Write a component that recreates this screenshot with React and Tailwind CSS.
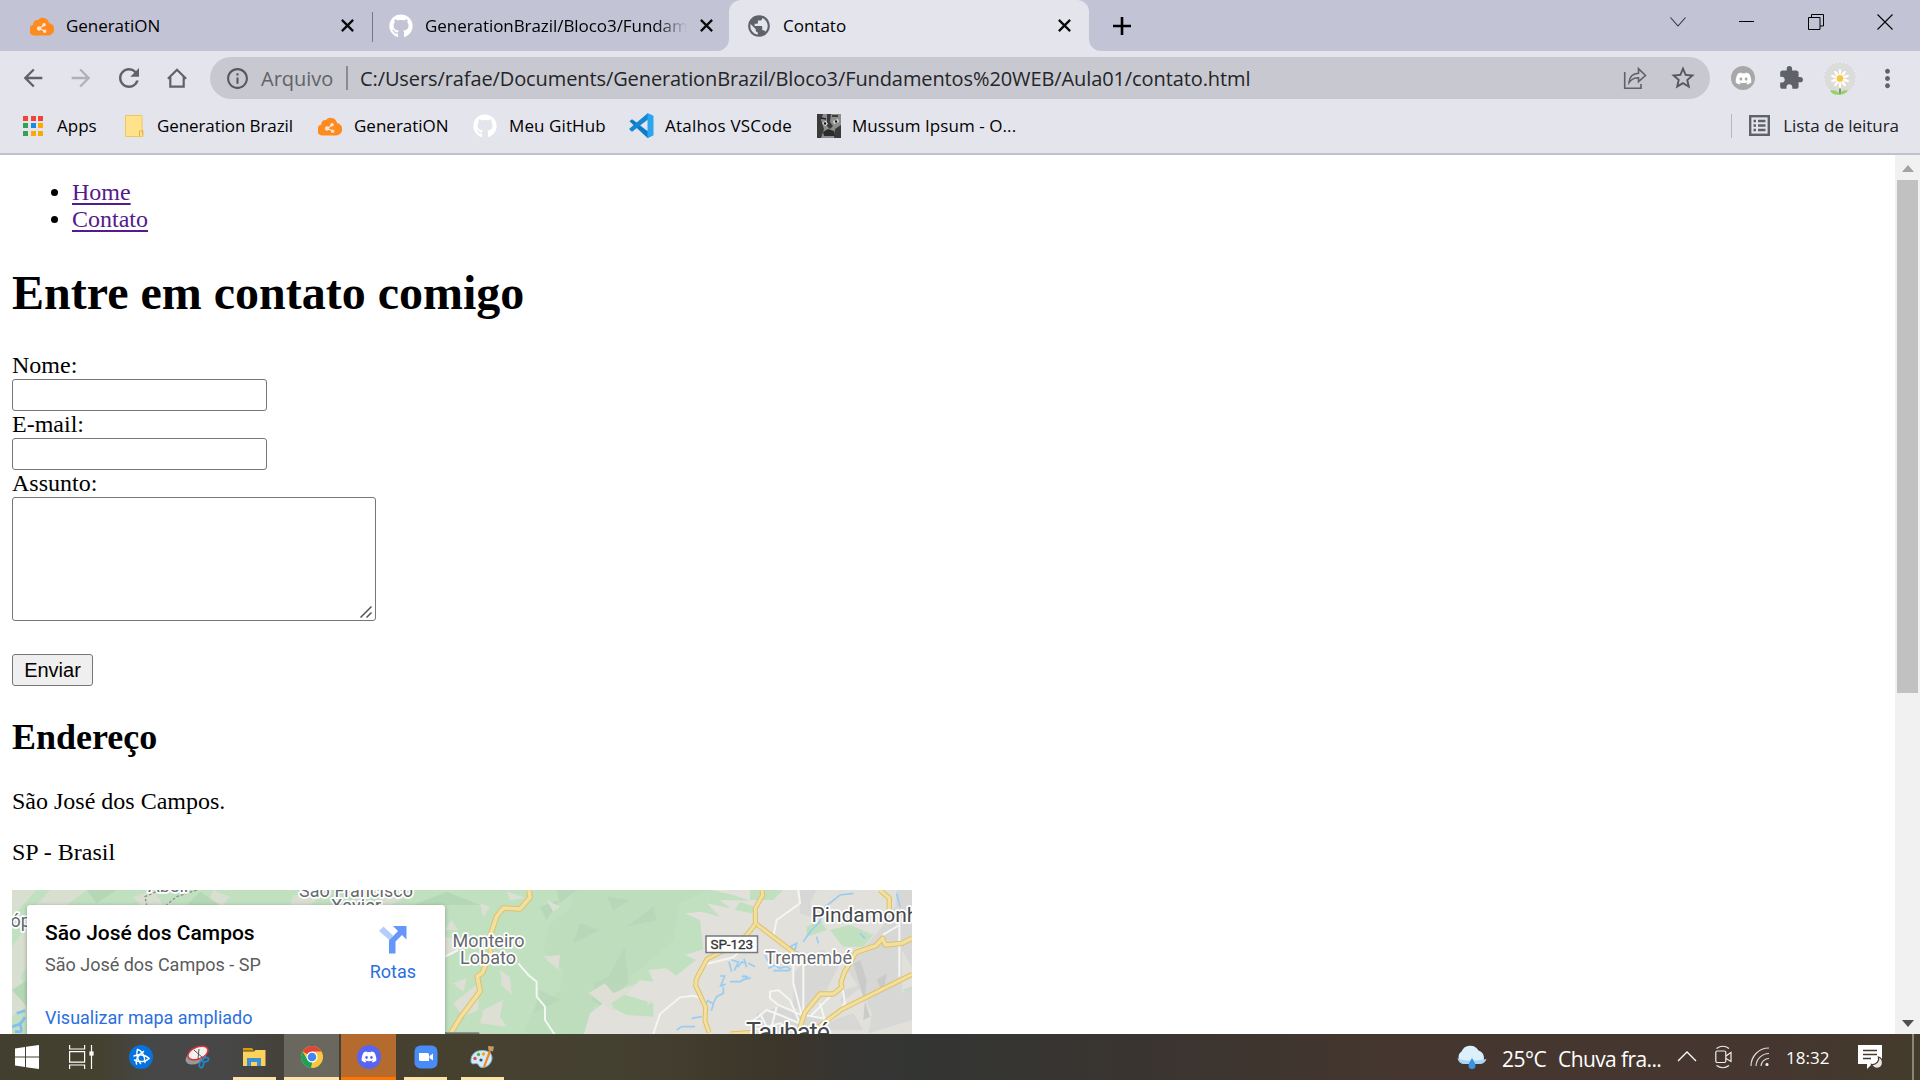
import React from "react";
import {
  MdArrowBack,
  MdArrowForward,
  MdRefresh,
  MdOutlineInfo,
  MdStarBorder,
  MdExtension,
  MdMoreVert,
  MdPublic,
} from "react-icons/md";
import { FaGithub, FaDiscord } from "react-icons/fa";

const UI = "font-['Open_Sans','Noto_Sans',sans-serif]";

function CloudIcon() {
  return (
    <svg width="24" height="20" viewBox="0 0 24 20" className="shrink-0">
      <path d="M5.500 19.500A5.500 5.500 0 0 1 3.500 8.500C2.800 5.500 5.500 3.500 7.800 4A6.500 6.500 0 0 1 19 7 6.300 6.300 0 0 1 18 19.500z" fill="#ff8b1f" />
      <g stroke="#f6e6dd" strokeWidth="1.300" fill="#f6e6dd">
        <path d="M9.500 12.500 14 9M9.500 12.500l5 2.500" fill="none" />
        <circle cx="9" cy="12.500" r="1.500" />
        <circle cx="14" cy="8.800" r="1.100" />
        <circle cx="14.700" cy="15.300" r="1.100" />
      </g>
    </svg>
  );
}

function CloseX() {
  return (
    <svg width="13" height="13" viewBox="0 0 12 12" className="shrink-0">
      <path d="M.8.8l10.400 10.400M11.200.8.8 11.200" stroke="#0a0a0a" strokeWidth="2.100" />
    </svg>
  );
}

function TabStrip() {
  return (
    <div className="flex h-[51px] bg-[#c3c3d6] text-[17px] text-black">
      <div className="flex w-[372px] items-center pl-[30px]">
        <CloudIcon />
        <span className="ml-3 w-[275px] tracking-[-0.05px]">GeneratiON</span>
        <CloseX />
      </div>
      <div className="mt-3 h-[30px] w-px bg-[#77778a]" />
      <div className="flex w-[344px] items-center pl-4">
        <FaGithub size={24} color="#fff" className="shrink-0" />
        <span className="ml-3 w-[262px] overflow-hidden whitespace-nowrap tracking-[-0.06px] [mask-image:linear-gradient(to_right,#000_88%,transparent)]">
          GenerationBrazil/Bloco3/Fundamentos
        </span>
        <span className="ml-[13px] flex">
          <CloseX />
        </span>
      </div>
      <div className="flex">
        <div className="w-3 self-end">
          <svg width="12" height="12" viewBox="0 0 12 12" className="block">
            <path d="M12 0v12H0A12 12 0 0 0 12 0z" fill="#e4e4ed" />
          </svg>
        </div>
        <div className="flex w-[360px] items-center rounded-t-xl bg-[#e4e4ed] pl-[17px]">
          <MdPublic size={26} color="#5f6368" className="shrink-0" />
          <span className="ml-[11px] w-[275px]">Contato</span>
          <CloseX />
        </div>
        <div className="w-3 self-end">
          <svg width="12" height="12" viewBox="0 0 12 12" className="block">
            <path d="M0 0v12h12A12 12 0 0 1 0 0z" fill="#e4e4ed" />
          </svg>
        </div>
      </div>
      <svg width="18" height="18" viewBox="0 0 18 18" className="ml-3 mt-[17px]">
        <path d="M9 0v18M0 9h18" stroke="#000" strokeWidth="2.600" />
      </svg>
      <div className="ml-auto mr-[35px] flex h-[43px] items-center">
        <svg width="16" height="10" viewBox="0 0 16 10">
          <path d="M.5.5 8 9 15.500.5" fill="none" stroke="#333" strokeWidth="1.100" />
        </svg>
        <div className="ml-[53px] h-px w-[15px] bg-black" />
        <svg width="16" height="16" viewBox="0 0 16 16" className="ml-[54px]">
          <path d="M.5 3.500h11.500v12H.5zM3.500 3.500v-3h12v11.500H12" fill="none" stroke="#000" />
        </svg>
        <svg width="16" height="16" viewBox="0 0 16 16" className="ml-[53px] mr-[-8px]">
          <path d="M.5.5l15 15M15.500.5l-15 15" stroke="#000" strokeWidth="1.100" />
        </svg>
      </div>
    </div>
  );
}

function Daisy() {
  const petals = [0, 36, 72, 108, 144, 180, 216, 252, 288, 324];
  return (
    <svg width="34" height="34" viewBox="0 0 34 34">
      <circle cx="17" cy="17" r="16" fill="#dcdcdc" stroke="#efefef" strokeDasharray="2 2" />
      <path d="M17 26v7.500" stroke="#5f8f3c" strokeWidth="1.600" />
      <path d="M17 33.500c-2-4-6-5-10-4 2 4 6 5 10 4zM17 33.500c1-4 4-5 8-4-2 3-5 4.500-8 4z" fill="#9ad06b" />
      {petals.map((a) => (
        <ellipse key={a} cx="17" cy="12" rx="1.700" ry="4.500" fill="#fff" stroke="#d8cfae" strokeWidth=".5" transform={`rotate(${a} 17 17.500)`} />
      ))}
      <circle cx="17" cy="17.500" r="3.200" fill="#f5c63f" />
    </svg>
  );
}

function Toolbar() {
  return (
    <div className="flex h-[54px] items-center bg-[#e4e4ed] text-[#5f6368]">
      <div className="ml-[19px] flex items-center gap-5">
        <MdArrowBack size={28} />
        <MdArrowForward size={28} color="#b0b0b7" />
        <MdRefresh size={30} className="-ml-px" />
        <svg width="20" height="20" viewBox="0 0 20 20" className="ml-[3px]">
          <path d="M3.300 8.800V18.700H16.700V8.800M.9 10.700 10 1.700l9.100 9" fill="none" stroke="#5f6368" strokeWidth="2.200" />
        </svg>
      </div>
      <div className="ml-[23px] flex h-[42px] w-[1500px] shrink-0 items-center rounded-full bg-[#c8c8d0] text-[20px]">
        <MdOutlineInfo size={25} className="ml-[15px] text-[#55585d]" />
        <span className="ml-[11px] w-[85px] pt-px tracking-[0px]">Arquivo</span>
        <div className="h-6 w-[2px] bg-[#8a8a92]" />
        <span className="ml-3 whitespace-nowrap pt-px tracking-[-0.1px] text-[#242528]">
          C:/Users/rafae/Documents/GenerationBrazil/Bloco3/Fundamentos%20WEB/Aula01/contato.html
        </span>
        <svg width="24" height="24" viewBox="0 0 24 24" className="ml-auto mr-[22px]">
          <path d="M1.700 6v16.200H18V18M6 16.500C6.500 10.500 10 7.500 15.500 7.200V2.700L22.500 9.500 15.500 15.700V11.700C11 11.700 8.500 13 6 16.500z" fill="none" stroke="#5f6368" strokeWidth="1.600" />
        </svg>
        <MdStarBorder size={28} className="mr-[13px] text-[#55585d]" />
      </div>
      <div className="ml-[21px] flex h-6 w-6 items-center justify-center rounded-full bg-[#a8a8a8]">
        <FaDiscord size={17} color="#fff" />
      </div>
      <MdExtension size={26} className="ml-[23px]" />
      <div className="ml-[19px]">
        <Daisy />
      </div>
      <MdMoreVert size={29} className="ml-[16px]" />
    </div>
  );
}

function Bookmarks() {
  const cells = ["#f44336", "#f44336", "#f44336", "#34a15a", "#1e88e5", "#f9ab00", "#34a15a", "#f9ab00", "#f9ab00"];
  return (
    <div className="flex h-[50px] items-center border-b-2 border-[#c1c1cc] bg-[#e4e4ed] pb-[7px] text-[17px] whitespace-nowrap text-black">
      <div className="ml-[23px] grid grid-cols-3 gap-x-[2.500px] gap-y-[2.500px]">
        {cells.map((c, i) => (
          <svg key={i} width="5" height="5"><rect width="5" height="5" fill={c} /></svg>
        ))}
      </div>
      <span className="ml-[14px] w-[68px]">Apps</span>
      <svg width="19" height="22" viewBox="0 0 19 22">
        <path d="M.5.5h16.500V15h1v6.500H.5z" fill="#ffe28a" stroke="#ecc85d" />
        <path d="M14.500 21v-5h3v4.500" fill="none" stroke="#ddb443" />
      </svg>
      <span className="ml-[13px] w-[161px] tracking-[-0.1px]">Generation Brazil</span>
      <CloudIcon />
      <span className="ml-3 w-[119px]">GeneratiON</span>
      <FaGithub size={24} color="#fff" />
      <span className="ml-3 w-[120px] tracking-[0.1px]">Meu GitHub</span>
      <svg width="25" height="25" viewBox="0 0 25 25">
        <path d="M.5 8.300 3 6.300 24 21v1.200L18.500 25z" fill="#0f7ac4" />
        <path d="M.5 16.700 3 18.700 19 6.500V0L.5 15.500z" fill="#1487d0" />
        <path d="M18.500 0 24.500 2.700V22.200L18.500 25V18.200L11 12.500 18.500 6.800z" fill="#2aa5ee" />
        <path d="M18.500 7v11L11.300 12.500z" fill="#e4e4ed" />
      </svg>
      <span className="ml-[11px] w-[152px] tracking-[0.22px]">Atalhos VSCode</span>
      <svg width="24" height="24" viewBox="0 0 24 24">
        <rect width="24" height="24" fill="#8d8d8d" />
        <path d="M0 0h6L4 6l3 9-3 9H0zM10 0h4l-1 8 3 4-3 3-3-3zM18 15l6-4v13h-7z" fill="#3a3a3a" />
        <path d="M6 18l5-3 6 2 1 5H7z" fill="#2c2c2c" />
        <path d="M5 9l4-2 2 3-3 2zM16 7l5-2 1 3-5 2z" fill="#e0e0e0" />
        <circle cx="8" cy="9.500" r="1.200" fill="#111" />
        <circle cx="19" cy="7.500" r="1.200" fill="#111" />
        <path d="M15 2l6 0M4 4l5 1" stroke="#222" strokeWidth="1.500" />
      </svg>
      <span className="ml-[11px] tracking-[0.07px]">Mussum Ipsum - O...</span>
      <div className="ml-auto mr-[21px] flex items-center text-[#202124]">
        <div className="mr-[17px] h-6 w-px bg-[#b7b7c2]" />
        <svg width="21" height="21" viewBox="0 0 21 21">
          <rect x="1.200" y="1.200" width="18.600" height="18.600" fill="none" stroke="#5f6368" strokeWidth="2.400" />
          <path d="M4.500 6h2.500M4.500 10.500h2.500M4.500 15h2.500M9 6h7.500M9 10.500h7.500M9 15h7.500" stroke="#5f6368" strokeWidth="2.300" />
        </svg>
        <span className="ml-[13px] tracking-[-0.05px]">Lista de leitura</span>
      </div>
    </div>
  );
}

function Road({ d, w = 16 }) {
  return (
    <g fill="none" strokeLinejoin="round">
      <path d={d} stroke="#dfc169" strokeWidth={w} />
      <path d={d} stroke="#f2e0a0" strokeWidth={w - 6} />
    </g>
  );
}

function MapDrawing() {
  const halo = { stroke: "#fff", strokeWidth: 3.5, strokeLinejoin: "round", paintOrder: "stroke" };
  return (
    <svg width="900" height="144" viewBox="0 0 900 144" className="block" fontFamily="Roboto, sans-serif">
      <rect width="900" height="144" fill="#c1e0c0" />
      <g transform="translate(-12 -10) scale(.33333)">
        <path d="M36 30H110L36 110zM36 200l45-60v120l-20 30 20 30v60l-45 30zM150 30l110 0-60 45h-90zM400 50l60-20 30 45h-70zM640 30l50 20-20 25h-50zM880 45l80 5-30 25h-60zM1180 30l60 10-70 35h-60z" fill="#dddfd5" opacity=".8" />
        <path d="M260 30h90l-60 40zM560 75l40-40 60 40zM1240 75l100-40 100 40zM36 330l45-30v80z" fill="#b4d8b6" />
        <path d="M480 30l-45 20 5 25M590 30l-60 20-30 25" stroke="#8b918d" strokeWidth="4" strokeDasharray="8 6" fill="none" />
        <path d="M50 400l25-8M36 440l25-8 14-20M60 425l5 30M45 455h20" stroke="#85bdf0" strokeWidth="8" fill="none" />
        <path d="M1360 370l75-60v80l-45 20zM1335 150l20-30 20 30z" fill="#dddfd5" />
      </g>
      <g transform="translate(428 -10) scale(.33333)">
        <path d="M400 30l-10 60-60 40-20 80 60 60-10 60-80 60-30 70h180l40-100 140-100 90-80 20-110 80-40z" fill="#bdddbd" />
        <path d="M350 30l60 0-50 40zM300 80l60-20-40 60zM500 50l70 10-50 30zM420 130l60 20-80 40zM640 80l-80 60 90-20z" fill="#b7d7b8" />
        <path d="M555 200l-50 90-40 20-10 50 30 20 80-70zM300 330l60 30-80 40z" fill="#b6d6b8" opacity=".7" />
        <path d="M815 30H1416V462H432L450 400 490 370 560 405 640 410 640 370 555 345 600 300 640 305 625 270 680 265 708 287 768 240 735 225 790 208 780 120 735 100 785 95 840 110 800 70 870 85 840 60 930 62 880 45z" fill="#e1e0da" />
        <path d="M930 30h100l-30 30-70 0zM900 65l55 20-20 15-50-10zM1100 140l40-20 20 30-60 20zM1170 150l60-15 70 30-30 35-60 0zM1386 330l30-10v20z" fill="#c1e0c0" />
        <path d="M495 310l25 30 70-30-30 30-45 30 10 30-80-60zM625 360l15 0-20 20zM310 230l50-5-5 45zM180 270l30 20 5 55-30-30zM15 170l80 20-80 40zM130 390l60-30-10 50 20 30-80-10zM40 310l40-15-10 40zM200 35l60 20-50 5zM320 60l40 20-20 15zM120 70l30 10-20 30z" fill="#dddfd5" />
        <path d="M1080 30h50l-20 40 30 50-60-20zM1370 30h46v230l-30-50 0 130 30-20v100l-130 40 10-60-40-80-40-60 60-60 50-60 40-60zM1060 280l60-60 30-10 50 40-40 80-60 70-40-20zM1210 330l70-20-80 60zM950 400l70-20 160 40 60-20 30 50H940z" fill="#d5d5d5" opacity=".85" />
        <path d="M1240 250l20-10 20 60-10 120 20-10-20-60zM1310 300l30-20-10 60z" fill="#cacaca" />
        <path d="M235 250l30 35 25 20 0 45 25 30 0 40 30 45M15 230l40-20M640 462l20-60 60-50 40-5 25 8M800 252l80-20 30-30M1000 170l10-50 70-50-5-40M1060 230v80l25 95M1090 250v150M1378 130v160M1378 135l-50 30M1085 405l-70-30-25-20 0-20 25-5 35 30 30 70M930 430l50-40 40 15 70 30M940 450l80-20 60 30M1110 410l60-60M1205 310l10 60-40 50-80-15M960 400l20 40M1010 380l-15 60M1140 370l20 70" fill="none" stroke="#f5f5f4" strokeWidth="6" />
        <path d="M867 245l8 30M875 240l20 6-12 26M893 262l12-16 14 4M912 236l8 26M925 250l20 10M840 288l14 0-12 30 15-6M870 305l30 0 20-10-10-10M905 300l28-6M905 290l20 0M790 380l14-18 16 10-6 20M820 370l10-20 20-10 0-20M755 415l30-5M710 450l15-10 40 0M985 265l20-10 14 10 20-6 14 10M985 245l-10-20M1000 272h50M1050 200l20-10-5 20zM1055 225l20-10M1090 185l20-30 30-30 10-40 50-40 40-5M1370 40l10 40M1130 170l5 20M1260 160l15 15" fill="none" stroke="#9accf2" strokeWidth="5" />
        <Road d="M267 30l3 22-30 35-50-3-20 25-20 60 2 50-25 60-15 10 8 45-60 80-28 46" w={17} />
        <Road d="M966 30l2 15-22 40 0 45 20 15 105 80" w={15} />
        <Road d="M946 132l-15 20-30 35-100 50-32 60-2 20 30 65-2 40 12 35" w={15} />
        <Road d="M1320 30l28 25v40M1416 175l-30 15-50 5-8-20-20 22-60 20-35 60-10 30 2 15-25 20h-40l-45 55-20 60" w={16} />
        <Road d="M1416 283l-210 105-80 60M870 462l80-6M1070 462l30-20" w={15} />
        <rect x="15" y="457" width="103" height="8" fill="#777" />
      </g>
      <g fill="#65696e" fontSize="18" {...halo}>
        <text x="440.500" y="56.500" textLength="72">Monteiro</text>
        <text x="448" y="74" textLength="56">Lobato</text>
        <text x="753" y="73.500" textLength="87">Tremembé</text>
        <text x="-1.500" y="37">óp</text>
        <text x="287" y="6.500" textLength="114">São Francisco</text>
        <text x="319" y="22" textLength="50">Xavier</text>
        <text x="136" y="1.500">Abel.</text>
      </g>
      <g fill="#45484c" {...halo}>
        <text x="799.500" y="32" fontSize="21" textLength="130">Pindamonhan</text>
        <text x="734" y="151" fontSize="25" textLength="84">Taubaté</text>
      </g>
      <rect x="694" y="46" width="51.500" height="16.500" fill="#fff" stroke="#75797d" strokeWidth="1.500" />
      <text x="698.500" y="59" fontSize="13.500" fill="#333" stroke="#333" strokeWidth=".3" textLength="42.500">SP-123</text>
    </svg>
  );
}

function MapFrame() {
  return (
    <div className="relative mt-6 h-[144px] w-[900px] overflow-hidden font-[Roboto,sans-serif]">
      <MapDrawing />
      <div className="absolute left-[15px] top-[15px] flex h-[160px] w-[418px] justify-between rounded-[3px] bg-white shadow-[0_1px_4px_rgba(0,0,0,0.3)]">
        <div className="pl-[18px]">
          <div className="mt-[15px] text-[21px] leading-[26px] font-medium whitespace-nowrap text-black">São José dos Campos</div>
          <div className="mt-[8px] text-[18px] leading-[22px] text-[#5b5b5b]">São José dos Campos - SP</div>
          <div className="mt-[31px] text-[18px] leading-[22px] text-[#2a6fe0]">Visualizar mapa ampliado</div>
        </div>
        <div className="mr-[29px] mt-[21px] flex flex-col items-center text-[18px] leading-[22px] text-[#2a6fe0]">
          <svg width="28" height="28" viewBox="0 0 28 28">
            <path d="M0 5 4.500.5 14 9.500 11.500 15z" fill="#b5cdfb" />
            <path d="M14 0h13.500v13.500L23 9l-6.500 6.500V27.500h-6.500V14.500L19 5z" fill="#6796fb" />
          </svg>
          <span className="mt-[7px]">Rotas</span>
        </div>
      </div>
    </div>
  );
}

function Page() {
  return (
    <div className="flex h-[879px] overflow-hidden bg-white">
      <div className="flex-1 pl-3 font-['Liberation_Serif',serif] text-[24px] leading-[27px] text-black">
        <ul className="mt-6 list-disc pl-[60px]">
          <li><a className="text-[#551a8b] underline decoration-2 underline-offset-[3px]">Home</a></li>
          <li><a className="text-[#551a8b] underline decoration-2 underline-offset-[3px]">Contato</a></li>
        </ul>
        <h1 className="mt-8 text-[48px] leading-[55px] font-bold">Entre em contato comigo</h1>
        <form className="mt-8 flex flex-col items-start">
          <label>Nome:</label>
          <div className="h-8 w-[255px] rounded-[3px] border border-[#767676] bg-white" />
          <label>E-mail:</label>
          <div className="h-8 w-[255px] rounded-[3px] border border-[#767676] bg-white" />
          <label>Assunto:</label>
          <div className="flex h-[124px] w-[364px] items-end justify-end rounded-[3px] border border-[#767676] bg-white p-[2px]">
            <svg width="14" height="14" viewBox="0 0 14 14">
              <path d="M1.500 13.500 12.500 2.500M7.500 13.500l5-5" stroke="#555" strokeWidth="1.500" />
            </svg>
          </div>
          <button type="button" className="mt-[33px] h-8 w-[81px] rounded-[3px] border border-[#767676] bg-[#efefef] text-center font-['Liberation_Sans',sans-serif] text-[20px] leading-[29px]">
            Enviar
          </button>
        </form>
        <h2 className="mt-[31px] text-[36px] leading-[41px] font-bold">Endereço</h2>
        <p className="mt-[30px]">São José dos Campos.</p>
        <p className="mt-6">SP - Brasil</p>
        <MapFrame />
      </div>
      <div className="flex w-[25px] flex-col items-center bg-[#f1f1f1]">
        <svg width="12" height="7" viewBox="0 0 12 7" className="mt-[10px]">
          <path d="M6 0l6 7H0z" fill="#a3a3a3" />
        </svg>
        <div className="mt-2 h-[513px] w-[21px] bg-[#c1c1c1]" />
        <svg width="12" height="7" viewBox="0 0 12 7" className="mt-auto mb-[7px]">
          <path d="M0 0h12L6 7z" fill="#505050" />
        </svg>
      </div>
    </div>
  );
}

function Slot({ children, tile = "", bar = "" }) {
  return (
    <div className={`mr-[2px] flex w-[55px] flex-col items-center ${tile}`}>
      <div className="flex h-[43px] items-center pt-[3px]">{children}</div>
      {bar && <div className={`h-[3px] ${bar}`} />}
    </div>
  );
}

function Taskbar() {
  return (
    <div className="flex h-[46px] bg-[linear-gradient(to_right,#433f30_0px,#44412f_100px,#474747_150px,#474747_230px,#433f33_300px,#46412f_440px,#454131_620px,#3c352a_780px,#353534_860px,#333533_920px,#3a3430_1150px,#45372f_1400px,#45372f_1780px,#433b2c_1920px)] text-white">
      <div className="flex w-[56px] items-center pl-[15px]">
        <svg width="24" height="24" viewBox="0 0 24 24" fill="#fff">
          <path d="M0 3.400 10 2v9.500H0zM11 1.800 24 0v11.500H11zM0 12.500h10V22L0 20.600zM11 12.500h13V24l-13-1.800z" />
        </svg>
      </div>
      <div className="flex w-[57px] items-center pl-[13px]">
        <svg width="25" height="24" viewBox="0 0 25 24" fill="none" stroke="#fff" strokeWidth="1.200">
          <path d="M.6 0v4h15V0M.6 24v-4h15v4M.6 6.600h15v10.600H.6zM22.500 0v24" />
          <rect x="21" y="7" width="3" height="3" fill="#fff" />
        </svg>
      </div>
      <Slot>
        <svg width="24" height="24" viewBox="0 0 24 24">
          <circle cx="12" cy="12" r="12" fill="#0674e0" />
          <g fill="none" stroke="#fff" strokeWidth="1.500" strokeLinecap="round">
            <path d="M8.500 4.500C12 5 16 10 16 17.500" />
            <path d="M20 13.500C17 17 11 17.500 5.500 15" />
            <path d="M7.500 19C6 15 9 10 14.500 6.500" />
            <path d="M8.500 4.500C7 8 8 14 11.500 18.500M20 13.500C18 10.500 11 8.500 5 11" />
          </g>
        </svg>
      </Slot>
      <Slot>
        <svg width="25" height="24" viewBox="0 0 25 24">
          <ellipse cx="11" cy="12" rx="11" ry="6.500" fill="#999" transform="rotate(-25 11 12)" />
          <ellipse cx="13" cy="8" rx="10.500" ry="6" fill="#f4f1f1" stroke="#d8373a" strokeWidth="1.500" transform="rotate(-22 13 8)" />
          <path d="M9 5l10 9M14 4l-1 10" stroke="#555" />
          <g fill="none" stroke="#2383c4" strokeWidth="1.800">
            <ellipse cx="20.500" cy="15" rx="3.300" ry="2" transform="rotate(-20 20 15)" />
            <ellipse cx="16.500" cy="19" rx="2" ry="3.500" transform="rotate(15 16 19)" />
          </g>
        </svg>
      </Slot>
      <Slot bar="w-[43px] bg-[#fde3a7]">
        <svg width="23" height="20" viewBox="0 0 23 20">
          <path d="M0 1h9l2 2.500H0z" fill="#dd9d08" />
          <path d="M0 4.500h11l1.500-1.500H22.500v16H0z" fill="#fdd259" />
          <path d="M4 19v-8h14v8h-4v-4H8v4z" fill="#3d8fd8" />
        </svg>
      </Slot>
      <Slot tile="bg-[#6a685e]" bar="w-full bg-[#fde3a7]">
        <svg width="24" height="24" viewBox="0 0 24 24">
          <circle cx="12" cy="12" r="11" fill="#fbc93d" />
          <path d="M12 12 2.500 6.500A11 11 0 0 1 21.500 6.500H12z" fill="#e0453a" />
          <path d="M2.500 6.500 8 15.500 12 17l-1 6A11 11 0 0 1 2.500 6.500z" fill="#1fa05a" />
          <path d="M12 17l-1.500 6L7 14.500z" fill="#1fa05a" />
          <circle cx="12" cy="12" r="5.500" fill="#fff" />
          <circle cx="12" cy="12" r="4.300" fill="#4285f4" />
        </svg>
      </Slot>
      <Slot tile="bg-[#b56b2e]" bar="w-full bg-[#ff7300]">
        <div className="flex h-6 w-6 items-center justify-center rounded-full bg-[#5865f2]">
          <FaDiscord size={16} />
        </div>
      </Slot>
      <Slot bar="w-[43px] bg-[#fde3a7]">
        <svg width="24" height="24" viewBox="0 0 24 24">
          <rect x=".5" y=".5" width="23" height="23" rx="6" fill="#4a8cf7" />
          <path d="M5 8h8.500q1.500 0 1.500 1.500V16H6.500Q5 16 5 14.500zM15.500 11l3.500-2.500v7L15.500 13z" fill="#fff" />
        </svg>
      </Slot>
      <Slot bar="w-[43px] bg-[#fde3a7]">
        <svg width="25" height="24" viewBox="0 0 25 24">
          <path d="M12 5.500c7 0 10 3 10 7.500s-4 9.500-10 9.500c-3.500 0-3-4-5.500-4S1.500 20 1 16.500C.5 10 5 5.500 12 5.500z" fill="#d3ebf8" stroke="#7fb6d8" />
          <circle cx="5" cy="13.500" r="1.700" fill="#e34b3e" />
          <circle cx="8.500" cy="9.500" r="1.700" fill="#57b04b" />
          <circle cx="13.500" cy="9" r="1.700" fill="#f3a81c" />
          <circle cx="11" cy="15" r="1.600" fill="#31546b" />
          <path d="M19 5.500 12.500 23l3-2L21 7z" fill="#f08a24" />
          <path d="M18 1l6 .5-1 5-4.500-1z" fill="#c99a62" />
        </svg>
      </Slot>
      <div className="ml-auto flex items-center">
        <svg width="32" height="25" viewBox="0 0 32 25">
          <path d="M8 19A7 7 0 0 1 5.500 6.500a9.500 9.500 0 0 1 17-1A7.500 7.500 0 0 1 24.500 19z" fill="#dcf0fc" />
          <path d="M8 19a7 7 0 0 1-6.500-6c6 3 14 4 29 1A7.500 7.500 0 0 1 24.500 19z" fill="#a9d5f6" />
          <path d="M16 13c2 3.500 3.500 5 3.500 7.500a3.500 3.500 0 0 1-7 0c0-2.500 1.500-4 3.500-7.500z" fill="#3b93e6" />
        </svg>
        <span className="ml-[14px] w-[56px] pt-[5px] text-[21px] tracking-[-0.5px]">25°C</span>
        <span className="w-[119px] pt-[5px] text-[21px] whitespace-nowrap tracking-[-0.6px]">Chuva fra...</span>
        <svg width="20" height="12" viewBox="0 0 20 12" className="mb-[2px]">
          <path d="M1 11l9-9 9 9" fill="none" stroke="#fff" strokeWidth="1.300" />
        </svg>
        <svg width="18" height="24" viewBox="0 0 18 24" className="ml-[18px]" fill="none" stroke="#eee" strokeWidth="1.200">
          <rect x=".8" y="6" width="10" height="11.500" rx="1.500" />
          <path d="M11 11l5-3.500v9L11 13.500M1.500 3.500Q8-1 14 3.500M1.500 20.500Q8 25 14 20.500" />
        </svg>
        <svg width="20" height="20" viewBox="0 0 20 20" className="ml-[17px]" fill="none" stroke="#eee" strokeWidth="1.200">
          <path d="M1 19A18 18 0 0 1 19 1M6 19A13 13 0 0 1 19 6.500M11 19a8 8 0 0 1 8-7.500" opacity=".9" />
          <circle cx="17" cy="17.500" r="1" fill="#fff" />
        </svg>
        <span className="ml-[16px] w-[72px] pt-px text-[17px]">18:32</span>
        <svg width="26" height="25" viewBox="0 0 26 25">
          <path d="M0 0h24v19H14l-5 5v-5H0z" fill="#fff" />
          <path d="M5 5.500h14M5 9.500h14M5 13.500h8" stroke="#45382c" strokeWidth="1.300" />
          <path d="M20.500 12c1 4-2 8-7 7.500 3 6 11 4.500 11-2 0-2.500-1.500-4.500-4-5.500z" fill="#e8e6e3" stroke="#45382c" strokeWidth="1.300" />
        </svg>
      </div>
      <div className="ml-[28px] mr-[6px] w-[2px] bg-[#8a847b]" />
    </div>
  );
}

export default function App() {
  return (
    <div className={`flex h-[1080px] w-[1920px] flex-col overflow-hidden ${UI}`}>
      <TabStrip />
      <Toolbar />
      <Bookmarks />
      <Page />
      <Taskbar />
    </div>
  );
}
